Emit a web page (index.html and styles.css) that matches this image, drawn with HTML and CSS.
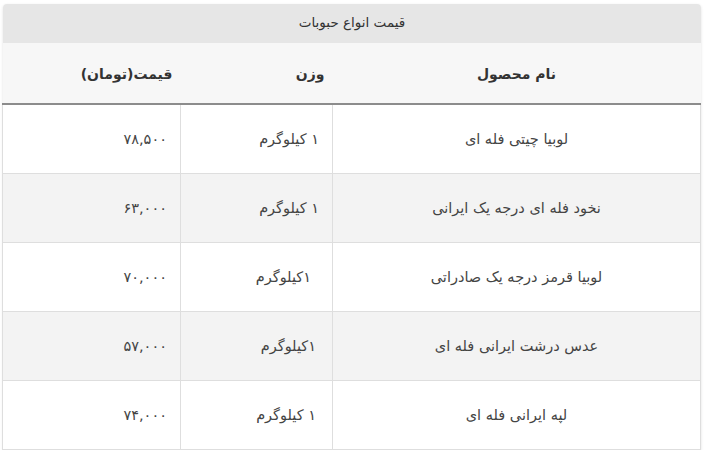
FILE: index.html
```html
<!DOCTYPE html>
<html lang="fa" dir="rtl">
<head>
<meta charset="utf-8">
<title>قیمت انواع حبوبات</title>
<link rel="stylesheet" href="styles.css">
</head>
<body>
<div class="wrap">
  <div class="caption">قیمت انواع حبوبات</div>
  <table class="prices">
    <colgroup>
      <col class="c-name">
      <col class="c-weight">
      <col class="c-price">
    </colgroup>
    <thead>
      <tr>
        <th class="name">نام محصول</th>
        <th class="weight">وزن</th>
        <th class="price">قیمت(تومان)</th>
      </tr>
    </thead>
    <tbody>
      <tr>
        <td class="name">لوبیا چیتی فله ای</td>
        <td class="weight">۱ کیلوگرم</td>
        <td class="price">۷۸,۵۰۰</td>
      </tr>
      <tr>
        <td class="name">نخود فله ای درجه یک ایرانی</td>
        <td class="weight">۱ کیلوگرم</td>
        <td class="price">۶۳,۰۰۰</td>
      </tr>
      <tr>
        <td class="name">لوبیا قرمز درجه یک صادراتی</td>
        <td class="weight"><span class="lead2"></span>۱کیلوگرم</td>
        <td class="price">۷۰,۰۰۰</td>
      </tr>
      <tr>
        <td class="name">عدس درشت ایرانی فله ای</td>
        <td class="weight"><span class="lead1"></span>۱کیلوگرم</td>
        <td class="price">۵۷,۰۰۰</td>
      </tr>
      <tr>
        <td class="name">لپه ایرانی فله ای</td>
        <td class="weight"><span class="lead1"></span>۱ کیلوگرم</td>
        <td class="price">۷۴,۰۰۰</td>
      </tr>
    </tbody>
  </table>
</div>
</body>
</html>
```

FILE: styles.css
```css
html, body {
  margin: 0;
  padding: 0;
  background: #ffffff;
}

body {
  font-family: "DejaVu Sans", "Noto Sans", sans-serif;
  color: #3a3a3a;
  direction: rtl;
}

.wrap {
  width: 698px;
  margin: 4px 4px 0 3px;
  box-shadow: 0 1px 3px rgba(0, 0, 0, 0.12);
  border-radius: 4px 4px 0 0;
}

.caption {
  height: 39px;
  line-height: 37px;
  background: #e6e6e6;
  border-radius: 4px 4px 0 0;
  text-align: center;
  font-size: 13.5px;
  color: #333;
}

.prices {
  width: 100%;
  border-collapse: collapse;
  table-layout: fixed;
}

.c-name { width: 368px; }
.c-weight { width: 152px; }
.c-price { width: 178px; }

.prices th {
  background: #f7f7f7;
  height: 58px;
  font-weight: bold;
  font-size: 14px;
  color: #333;
  border-bottom: 2px solid #8c8c8c;
  padding: 2px 8px 0;
  vertical-align: middle;
}

.prices th.name { text-align: center; }
.prices th.weight,
.prices th.price { text-align: right; }

.prices td {
  height: 68px;
  padding: 0 13px;
  font-size: 14.5px;
  color: #444;
  border: 1px solid #dedede;
  border-top: 0;
  vertical-align: middle;
  text-align: right;
}

.prices td.name { text-align: center; }

.prices tbody tr:nth-child(even) td {
  background: #f3f3f3;
}

.lead1 { display: inline-block; width: 3px; }
.lead2 { display: inline-block; width: 8px; }
```
